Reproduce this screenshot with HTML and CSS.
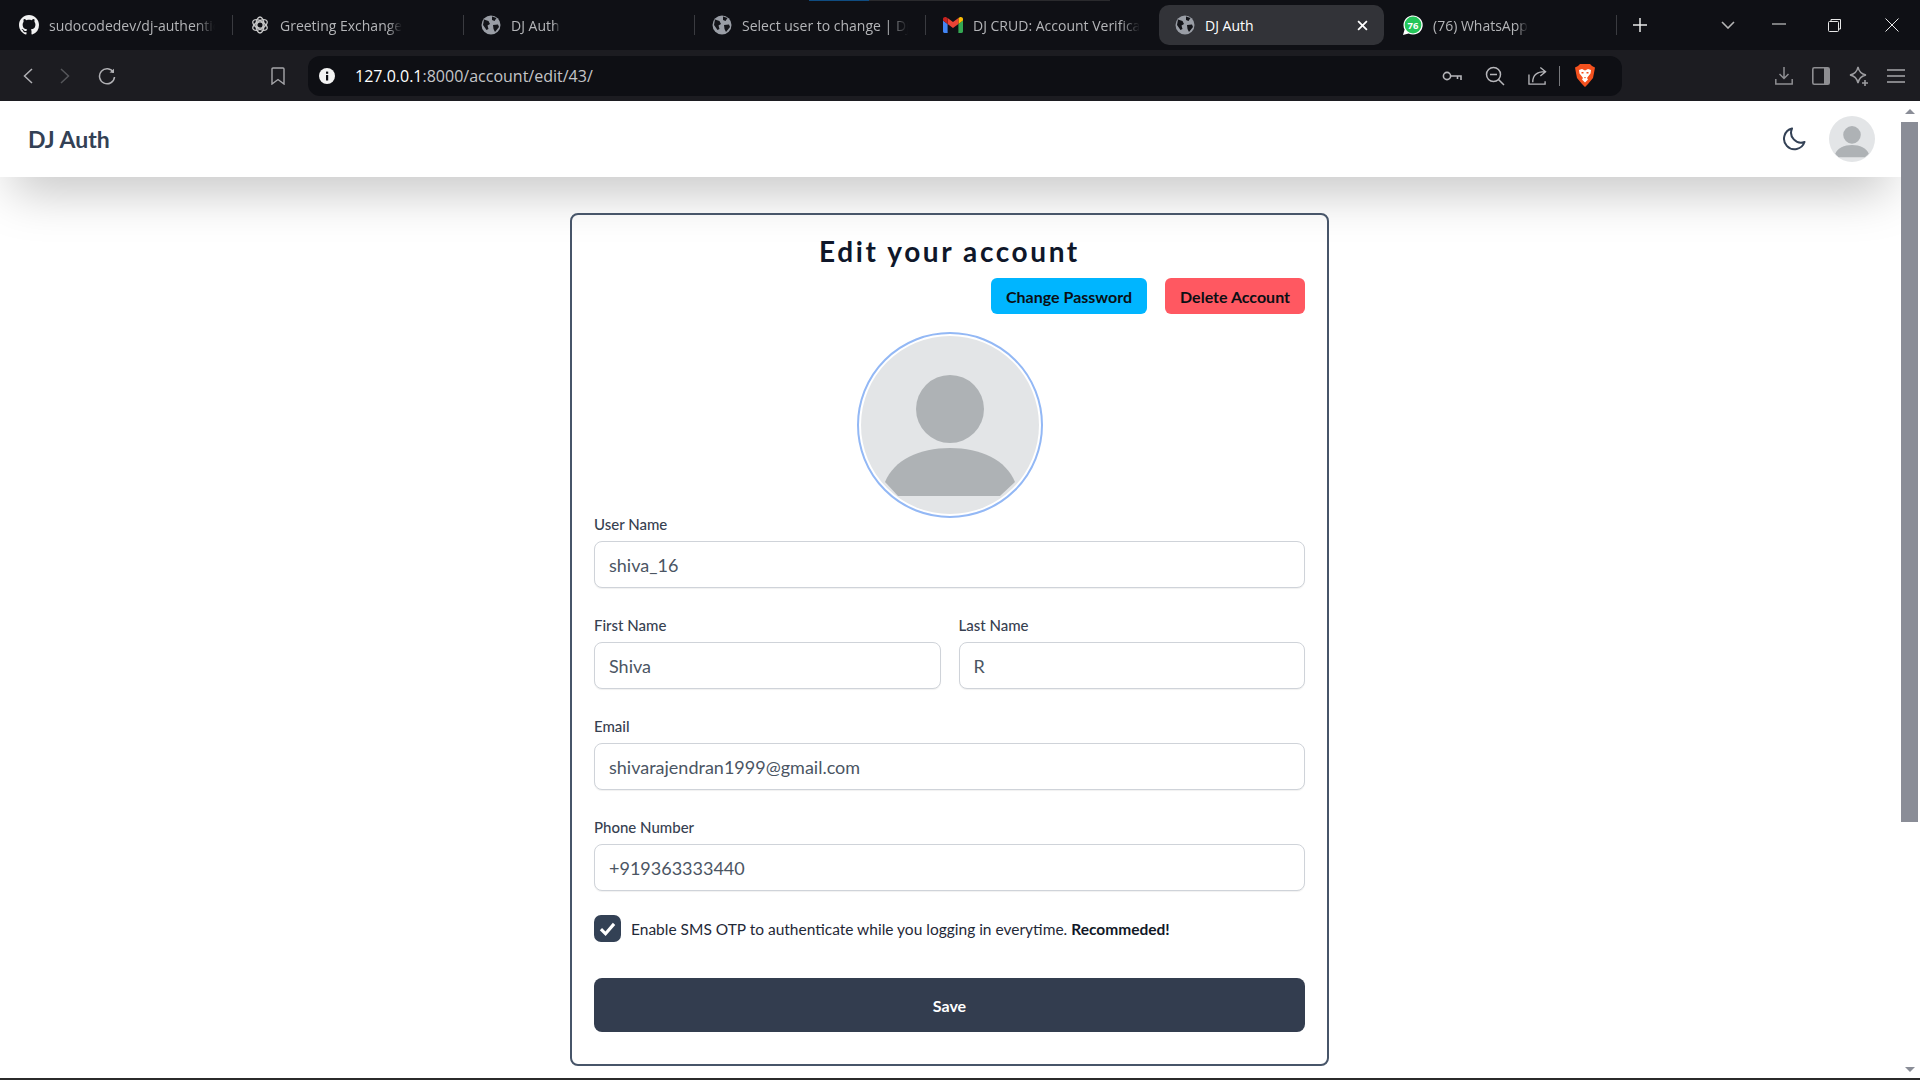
FILE: index.html
```html
<!DOCTYPE html>
<html lang="en">

<head>
  <meta charset="utf-8">
  <title>DJ Auth</title>
  <link rel="stylesheet" href="styles.css">
</head>

<body>
  <svg class="defs" width="0" height="0">
    <symbol id="globe" viewBox="0 0 20 20">
      <circle cx="10" cy="10" r="9.5" fill="#9a9ea6"/>
      <path d="M3 4.5 L7.5 6 L9 9 L6.5 10.5 L7.5 14 L5.5 15 L2 10 Z M11 1.5 L15.5 3 L13.5 6 L11 5 Z M12 10 L17 9.5 L18 12 L14 17 L12.5 14 Z" fill="#14151a"/>
    </symbol>
    <symbol id="person" viewBox="0 0 178 178">
      <rect width="178" height="178" fill="#e3e5e7"/>
      <circle cx="89" cy="73" r="34" fill="#aeb2b5"/>
      <path d="M37 160 L24 146 C33 124 58 112 89 112 C120 112 145 124 154 146 L139 160 Z" fill="#aeb2b5"/>
    </symbol>
  </svg>

  <div class="tabstrip">
    <div class="progress"></div>
    <div class="tab">
      <svg class="favicon" viewBox="0 0 16 16"><path fill="#f2f2f2" d="M8 0C3.58 0 0 3.58 0 8c0 3.54 2.29 6.53 5.47 7.59.4.07.55-.17.55-.38 0-.19-.01-.82-.01-1.49-2.01.37-2.53-.49-2.69-.94-.09-.23-.48-.94-.82-1.13-.28-.15-.68-.52-.01-.53.63-.01 1.08.58 1.23.82.72 1.21 1.87.87 2.33.66.07-.52.28-.87.51-1.07-1.78-.2-3.64-.89-3.64-3.95 0-.87.31-1.59.82-2.15-.08-.2-.36-1.02.08-2.12 0 0 .67-.21 2.2.82.64-.18 1.32-.27 2-.27.68 0 1.36.09 2 .27 1.53-1.04 2.2-.82 2.2-.82.44 1.1.16 1.92.08 2.12.51.56.82 1.27.82 2.15 0 3.07-1.87 3.75-3.65 3.95.29.25.54.73.54 1.48 0 1.07-.01 1.93-.01 2.2 0 .21.15.46.55.38A8.013 8.013 0 0016 8c0-4.42-3.58-8-8-8z"/></svg>
      <span class="tab-title">sudocodedev/dj-authentication</span>
    </div>
    <div class="tab">
      <svg class="favicon" viewBox="0 0 20 20" fill="none" stroke="#c9c9c9" stroke-width="1.3">
        <circle cx="10" cy="10" r="3.2"/>
        <ellipse cx="10" cy="10" rx="8" ry="4" transform="rotate(30 10 10)"/>
        <ellipse cx="10" cy="10" rx="8" ry="4" transform="rotate(90 10 10)"/>
        <ellipse cx="10" cy="10" rx="8" ry="4" transform="rotate(150 10 10)"/>
      </svg>
      <span class="tab-title">Greeting Exchange</span>
    </div>
    <div class="tab">
      <svg class="favicon"><use href="#globe"/></svg>
      <span class="tab-title">DJ Auth</span>
    </div>
    <div class="tab">
      <svg class="favicon"><use href="#globe"/></svg>
      <span class="tab-title">Select user to change | Django site admin</span>
    </div>
    <div class="tab tab-last">
      <svg class="favicon" viewBox="0 0 20 16">
        <path d="M1.4 16 H4.6 V7 L0 3.6 V14.6 C0 15.4 .6 16 1.4 16 Z" fill="#4285f4"/>
        <path d="M15.4 16 H18.6 C19.4 16 20 15.4 20 14.6 V3.6 L15.4 7 Z" fill="#34a853"/>
        <path d="M15.4 1 V7 L20 3.6 V1.8 C20 .2 18 -.7 16.8 .3 Z" fill="#fbbc04"/>
        <path d="M4.6 7 V1 L10 5 L15.4 1 V7 L10 11 Z" fill="#ea4335"/>
        <path d="M0 1.8 V3.6 L4.6 7 V1 L3.2 .3 C2 -.7 0 .2 0 1.8 Z" fill="#c5221f"/>
      </svg>
      <span class="tab-title">DJ CRUD: Account Verification</span>
    </div>
    <div class="tab-active">
      <svg class="favicon"><use href="#globe"/></svg>
      <span class="tab-title">DJ Auth</span>
      <svg class="tab-close" viewBox="0 0 10 10" fill="none" stroke="#fff" stroke-width="1.6"><path d="M1 1 L9 9 M9 1 L1 9"/></svg>
    </div>
    <div class="tab">
      <svg class="favicon" viewBox="0 0 20 20">
        <path d="M0 20 L1.6 14.5 A9.6 9.6 0 1 1 5.6 18.5 Z" fill="#fff"/>
        <circle cx="10" cy="10" r="8.4" fill="#25c65a"/>
        <text class="badge-count" x="10" y="13.5" text-anchor="middle">76</text>
      </svg>
      <span class="tab-title">(76) WhatsApp</span>
    </div>
    <svg class="strip-icon plus" viewBox="0 0 14 14" stroke="#e8e8e8" stroke-width="1.5"><path d="M7 0 V14 M0 7 H14"/></svg>
    <svg class="strip-icon chevron" viewBox="0 0 14 8" fill="none" stroke="#b5b5b5" stroke-width="1.6"><path d="M1 1 L7 7 L13 1"/></svg>
    <svg class="strip-icon win-min" viewBox="0 0 14 2" stroke="#e8e8e8" stroke-width="1"><path d="M0 1 H14"/></svg>
    <svg class="strip-icon win-max" viewBox="0 0 13 13" fill="none" stroke="#e8e8e8" stroke-width="1"><rect x=".5" y="2.5" width="10" height="10" rx="1"/><path d="M3 2.5 V.5 H12.5 V10 H10.5"/></svg>
    <svg class="strip-icon win-close" viewBox="0 0 14 14" stroke="#e8e8e8" stroke-width="1"><path d="M.5 .5 L13.5 13.5 M13.5 .5 L.5 13.5"/></svg>
  </div>

  <div class="toolbar">
    <svg class="tool nav-back" viewBox="0 0 10 16" fill="none" stroke="#b0b0b4" stroke-width="1.5"><path d="M9 1 L1.5 8 L9 15"/></svg>
    <svg class="tool nav-fwd" viewBox="0 0 10 16" fill="none" stroke="#55565a" stroke-width="1.5"><path d="M1 1 L8.5 8 L1 15"/></svg>
    <svg class="tool nav-reload" viewBox="0 0 18 18" fill="none" stroke="#b0b0b4" stroke-width="1.5"><path d="M15.5 5.5 A7.5 7.5 0 1 0 16.5 10"/><path d="M11.5 5.5 L16 6 L16 1.8" fill="#b0b0b4" stroke="none"/></svg>
    <svg class="tool nav-mark" viewBox="0 0 14 18" fill="none" stroke="#a6a6aa" stroke-width="1.4"><path d="M1 2 Q1 1 2 1 H12 Q13 1 13 2 V17 L7 12.5 L1 17 Z"/></svg>
    <div class="addressbar">
      <svg class="info" viewBox="0 0 16 16"><circle cx="8" cy="8" r="8" fill="#f4f4f4"/><rect x="7" y="7" width="2.2" height="5.5" fill="#0e0f14"/><rect x="7" y="3.6" width="2.2" height="2.2" fill="#0e0f14"/></svg>
      <div class="url"><span class="url-host">127.0.0.1</span>:8000/account/edit/43/</div>
      <svg class="addr-icon key" viewBox="0 0 20 12" fill="none" stroke="#b6b6ba" stroke-width="1.6"><circle cx="5" cy="6" r="3.6"/><path d="M8.6 6 H19 V10 M15.5 6 V9"/></svg>
      <svg class="addr-icon zoom" viewBox="0 0 20 20" fill="none" stroke="#b6b6ba" stroke-width="1.5"><circle cx="8.5" cy="8.5" r="7"/><path d="M5 8.5 H12 M13.5 13.5 L19 19"/></svg>
      <svg class="addr-icon share" viewBox="0 0 20 20" fill="none" stroke="#b6b6ba" stroke-width="1.4"><path d="M1 9 V19 H18 V16"/><path d="M5 17 C5 10 9 6 18 6 M13 1.5 L18.5 6 L13 10.5"/></svg>
      <div class="addr-sep"></div>
      <svg class="brave" viewBox="0 0 20 23">
        <path d="M5 0 H15 L17 2 L20 3.5 L19 9 L18 14 L13 20 L10 23 L7 20 L2 14 L1 9 L0 3.5 L3 2 Z" fill="#f4511e"/>
        <path d="M4 6 L7 5 L10 6.5 L13 5 L16 6 L15.5 9.5 L13.5 12 L12 14 L13 15.5 L10 18.5 L7 15.5 L8 14 L6.5 12 L4.5 9.5 Z" fill="#fff"/>
        <path d="M6.5 8 H8.5 V9.5 H6.5 Z M11.5 8 H13.5 V9.5 H11.5 Z M9 13 H11 L10 14.5 Z" fill="#f4511e"/>
      </svg>
    </div>
    <svg class="tool side-down" viewBox="0 0 18 18" fill="none" stroke="#8e8e92" stroke-width="1.5"><path d="M9 0 V11 M4.5 7 L9 11.5 L13.5 7 M.8 12 V17 H17.2 V12"/></svg>
    <svg class="tool side-panel" viewBox="0 0 18 18"><rect x=".8" y=".8" width="16.4" height="16.4" rx="1.5" fill="none" stroke="#8e8e92" stroke-width="1.6"/><rect x="12" y="1" width="5" height="16" fill="#8e8e92"/></svg>
    <svg class="tool side-star" viewBox="0 0 20 20" fill="none" stroke="#9c9ca0" stroke-width="1.4"><path d="M9 1 C10 6 12 8 17 9 C12 10 10 12 9 17 C8 12 6 10 1 9 C6 8 8 6 9 1 Z"/><path d="M16 14 V20 M13 17 H19" stroke-width="1.6"/></svg>
    <svg class="tool side-menu" viewBox="0 0 18 14" stroke="#a6a6aa" stroke-width="1.3"><path d="M0 1 H18 M0 7 H18 M0 13 H18"/></svg>
  </div>

  <div class="viewport">
    <div class="page">
      <header class="navbar">
        <div class="brand">DJ Auth</div>
        <svg class="moon" viewBox="0 0 24 24" fill="none" stroke="#334155" stroke-width="2" stroke-linecap="round" stroke-linejoin="round"><path d="M10 1.5 A10.5 10.5 0 1 0 22.5 15 A10 10 0 0 1 10 1.5 Z"/></svg>
        <svg class="nav-avatar"><use href="#person"/></svg>
      </header>

      <main class="card">
        <h1 class="card-title">Edit your account</h1>
        <div class="card-actions">
          <a class="btn btn-info">Change Password</a>
          <a class="btn btn-danger">Delete Account</a>
        </div>
        <div class="avatar-ring">
          <svg class="avatar"><use href="#person"/></svg>
        </div>
        <form class="form">
          <div class="field">
            <label>User Name</label>
            <input type="text" value="shiva_16">
          </div>
          <div class="field-row">
            <div class="field">
              <label>First Name</label>
              <input type="text" value="Shiva">
            </div>
            <div class="field">
              <label>Last Name</label>
              <input type="text" value="R">
            </div>
          </div>
          <div class="field">
            <label>Email</label>
            <input type="text" value="shivarajendran1999@gmail.com">
          </div>
          <div class="field">
            <label>Phone Number</label>
            <input type="text" value="+919363333440">
          </div>
          <div class="otp">
            <span class="checkbox">
              <svg viewBox="0 0 16 16" fill="none" stroke="#fff" stroke-width="2.4"><path d="M3 8.5 L6.5 12 L13 4.5"/></svg>
            </span>
            <span>Enable SMS OTP to authenticate while you logging in everytime. <b>Recommeded!</b></span>
          </div>
          <button type="button" class="save">Save</button>
        </form>
      </main>
    </div>
    <div class="scrollbar">
      <div class="arrow-up"></div>
      <div class="thumb"></div>
      <div class="arrow-down"></div>
    </div>
  </div>

  <div class="taskbar"></div>
</body>

</html>
```

FILE: styles.css
```css
* { box-sizing: border-box; }

html, body {
  margin: 0;
  height: 100%;
}

body {
  display: flex;
  flex-direction: column;
  height: 1080px;
  overflow: hidden;
  background-color: white;
  font-family: Lato, "Liberation Sans", sans-serif;
  color: #334155;
}

.defs { display: block; height: 0; }

/* browser tabs */

.tabstrip {
  position: relative;
  display: flex;
  align-items: center;
  flex: none;
  height: 50px;
  padding-left: 2px;
  background-color: #0f1015;
  font-family: "Open Sans", sans-serif;
  font-size: 14px;
  color: #b4b5b8;
}

.progress {
  position: absolute;
  top: 0;
  left: 809px;
  width: 301px;
  height: 1px;
  background: linear-gradient(to right, #0f4c81 20%, #2a2a2d 20%);
}

.tab {
  display: flex;
  align-items: center;
  flex: none;
  gap: 10px;
  width: 231px;
  height: 20px;
  padding: 0 17px;
  border-right: 1px solid #3a3b40;
}

.tab-last { border-right: none; }

.tab-active {
  display: flex;
  align-items: center;
  flex: none;
  gap: 10px;
  width: 225px;
  height: 40px;
  margin: 0 2px;
  padding: 0 16px;
  border-radius: 10px;
  background-color: #323338;
  color: white;
}

.tab-active .tab-title { flex: 1; }

.favicon {
  flex: none;
  width: 20px;
  height: 20px;
}

.badge-count {
  font-family: "Open Sans", sans-serif;
  font-size: 9.5px;
  font-weight: 700;
  fill: white;
}

.tab-title {
  overflow: hidden;
  white-space: nowrap;
}

.tab .tab-title {
  -webkit-mask-image: linear-gradient(to right, black 88%, transparent 100%);
  mask-image: linear-gradient(to right, black 88%, transparent 100%);
}

.tab-close {
  flex: none;
  width: 11px;
  height: 11px;
}

.strip-icon { flex: none; }

.plus { width: 14px; height: 14px; margin-left: 16px; }
.chevron { width: 14px; height: 8px; margin-left: 74px; }
.win-min { width: 14px; height: 2px; margin-left: 37px; margin-top: -2px; }
.win-max { width: 13px; height: 13px; margin-left: 42px; }
.win-close { width: 14px; height: 14px; margin-left: 44px; }

/* browser toolbar */

.toolbar {
  display: flex;
  align-items: center;
  flex: none;
  height: 51px;
  background-color: #1c1c21;
}

.tool { flex: none; }

.nav-back { width: 10px; height: 16px; margin-left: 23px; }
.nav-fwd { width: 10px; height: 16px; margin-left: 27px; }
.nav-reload { width: 18px; height: 18px; margin-left: 28px; }
.nav-mark { width: 14px; height: 18px; margin-left: 155px; }

.addressbar {
  display: flex;
  align-items: center;
  flex: none;
  width: 1314px;
  height: 40px;
  margin-left: 23px;
  padding-left: 11px;
  border-radius: 12px;
  background-color: #0e0f14;
}

.info { flex: none; width: 16px; height: 16px; }

.url {
  flex: 1;
  margin-left: 20px;
  font-family: "Open Sans", sans-serif;
  font-size: 16px;
  color: #c4c5c8;
  white-space: nowrap;
}

.url-host { color: white; }

.addr-icon { flex: none; }

.key { width: 20px; height: 12px; }
.zoom { width: 20px; height: 20px; margin-left: 23px; }
.share { width: 19px; height: 19px; margin-left: 23px; }

.addr-sep {
  flex: none;
  width: 1px;
  height: 20px;
  margin-left: 12px;
  background-color: #77787c;
}

.brave {
  flex: none;
  width: 20px;
  height: 23px;
  margin-left: 15px;
  margin-right: 27px;
}

.side-down { width: 18px; height: 18px; margin-left: 153px; }
.side-panel { width: 18px; height: 18px; margin-left: 19px; }
.side-star { width: 20px; height: 20px; margin-left: 19px; }
.side-menu { width: 18px; height: 14px; margin-left: 18px; }

/* the page itself */

.viewport {
  display: flex;
  flex: 1;
  min-height: 0;
}

.page {
  flex: 1;
  min-width: 0;
  overflow: hidden;
}

.navbar {
  display: flex;
  align-items: center;
  height: 76px;
  padding: 0 26px 0 28px;
  background-color: white;
  box-shadow: 0 25px 50px -12px rgba(0, 0, 0, 0.25);
}

.brand {
  flex: 1;
  font-size: 23px;
  font-weight: 700;
  color: #334155;
}

.moon { width: 24px; height: 24px; margin-right: 23px; }

.nav-avatar {
  width: 46px;
  height: 46px;
  border-radius: 50%;
}

.card {
  width: 759px;
  margin: 36px auto 0;
  padding: 0 22px 32px;
  border: 2px solid #475569;
  border-radius: 8px;
  transform: translateX(-1px);
}

.card-title {
  height: 63px;
  margin: 0;
  padding-top: 16px;
  font-size: 28px;
  font-weight: 700;
  line-height: 40px;
  letter-spacing: 2.6px;
  text-align: center;
  color: #0f172a;
}

.card-actions {
  display: flex;
  justify-content: flex-end;
  gap: 18px;
}

.btn {
  display: flex;
  align-items: center;
  padding: 0 15px;
  height: 36px;
  border-radius: 6px;
  font-size: 16px;
  font-weight: 700;
  color: #0b0f14;
}

.btn-info { background-color: #00b5ff; }
.btn-danger { background-color: #ff5861; }

.avatar-ring {
  width: 186px;
  height: 186px;
  margin: 18px auto -6px;
  padding: 2px;
  border: 2px solid #93b8f5;
  border-radius: 50%;
}

.avatar {
  display: block;
  width: 178px;
  height: 178px;
  border-radius: 50%;
}

.form {
  display: flex;
  flex-direction: column;
  gap: 25px;
}

.field-row {
  display: flex;
  gap: 18px;
}

.field-row .field { flex: 1; }

.field label {
  display: block;
  height: 24px;
  margin-bottom: 5px;
  font-size: 15px;
  font-weight: 500;
  line-height: 24px;
  color: #374151;
}

.field input {
  display: block;
  width: 100%;
  height: 47px;
  padding: 0 14px;
  border: 1px solid #cfd3d9;
  border-radius: 8px;
  box-shadow: 0 1px 1px rgba(0, 0, 0, 0.06);
  font-family: inherit;
  font-size: 18px;
  color: #4b5563;
  background-color: white;
}

.otp {
  display: flex;
  align-items: center;
  gap: 10px;
  margin-top: -1px;
  font-size: 15.5px;
  color: #1f2937;
}

.otp b { font-weight: 700; color: #111827; }

.checkbox {
  display: flex;
  align-items: center;
  justify-content: center;
  flex: none;
  width: 27px;
  height: 27px;
  border-radius: 7px;
  background-color: #334155;
}

.checkbox svg { width: 21px; height: 21px; }

.save {
  height: 54px;
  margin-top: 11px;
  border: none;
  border-radius: 8px;
  background-color: #333d4f;
  font-family: inherit;
  font-size: 16px;
  font-weight: 700;
  color: white;
}

/* page scrollbar */

.scrollbar {
  display: flex;
  flex-direction: column;
  align-items: center;
  flex: none;
  width: 19px;
  padding-right: 2px;
}

.arrow-up {
  width: 0;
  height: 0;
  margin-top: 8px;
  border: 5px solid transparent;
  border-top: none;
  border-bottom-color: #8a8d97;
}

.thumb {
  width: 17px;
  height: 700px;
  margin-top: 8px;
  background-color: #8a8d97;
}

.arrow-down {
  width: 0;
  height: 0;
  margin-top: auto;
  margin-bottom: 6px;
  border: 5px solid transparent;
  border-bottom: none;
  border-top-color: #8a8d97;
}

.taskbar {
  flex: none;
  height: 2px;
  background-color: #2b2b2b;
}
```
